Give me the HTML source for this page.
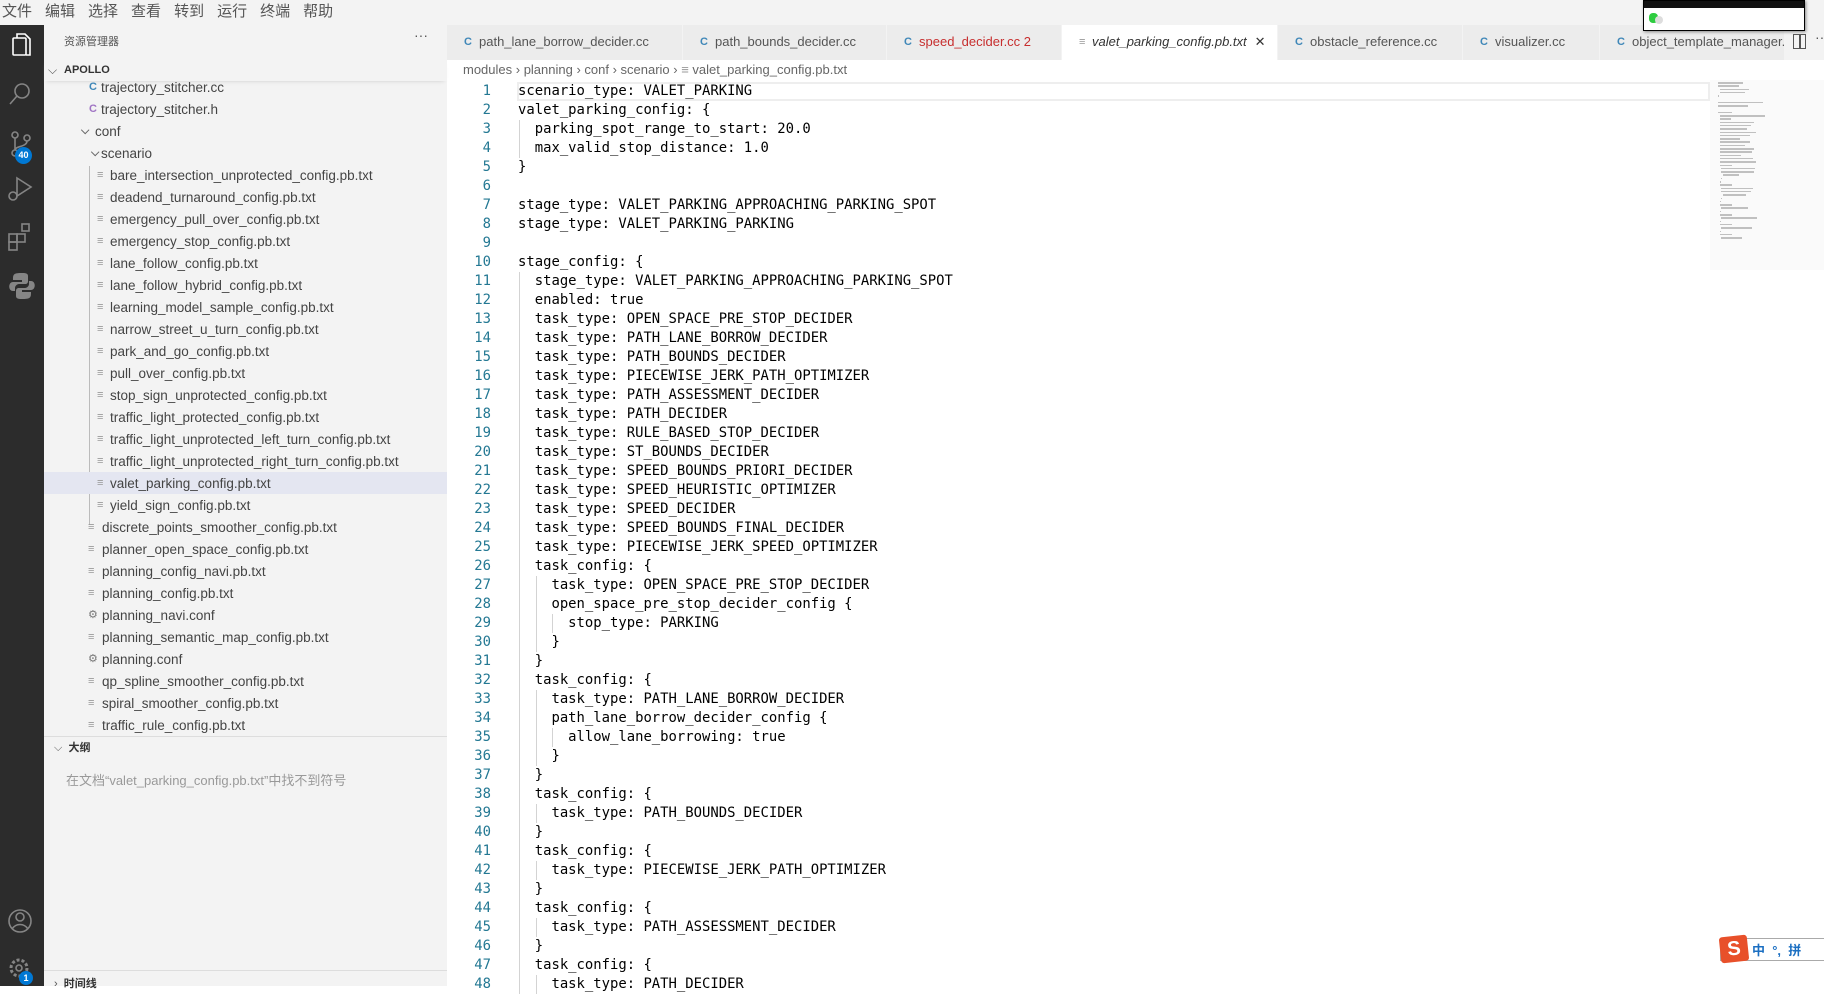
<!DOCTYPE html>
<html><head><meta charset="utf-8"><style>
*{margin:0;padding:0;box-sizing:border-box}
body{width:1824px;height:986px;overflow:hidden;background:#fff;position:relative;font-family:"Liberation Sans","Noto Sans CJK SC",sans-serif}
.abs{position:absolute}
#menu{left:0;top:0;width:1824px;height:25px;background:#f3f3f3;font-size:15px;color:#555;line-height:24px}
#menu span{margin-left:2px;margin-right:11px}
#act{left:0;top:25px;width:44px;height:961px;background:#2c2c2c}
#side{left:44px;top:25px;width:403px;height:961px;background:#f3f3f3}
.row{position:absolute;left:0;width:403px;height:22px;line-height:23px;font-size:13.5px;color:#444;white-space:nowrap}
.row.sel{background:#e4e6f1}
.ic{position:absolute;font-size:11px;color:#999}
#tabs{left:447px;top:25px;width:1377px;height:35px;background:#f3f3f3}
.tab{position:absolute;top:0;height:35px;line-height:34px;background:#ececec;border-right:1px solid #f3f3f3;font-size:13px;color:#555;white-space:nowrap;overflow:hidden;padding-left:18px}
.tab .g{position:absolute;left:17px;color:#3f87b8;font-size:11px;font-weight:bold}
#code{left:447px;top:82px;font-family:"DejaVu Sans Mono",monospace;font-size:13.9px;line-height:19px}
.ln{position:absolute;left:0;width:44px;text-align:right;color:#237893}
.cl{position:absolute;left:71px;white-space:pre;color:#000}
.guide{position:absolute;width:1px;background:#d3d3d3}
</style></head><body>
<div id="menu" class="abs"><span>文件</span><span>编辑</span><span>选择</span><span>查看</span><span>转到</span><span>运行</span><span>终端</span><span>帮助</span></div>

<div id="act" class="abs">
<svg width="44" height="961" viewBox="0 0 44 961" fill="none" stroke="#858585" stroke-width="1.6">
<g stroke="#fff"><rect x="13" y="13" width="13" height="17" rx="1"/><path d="M17 13v-4h8l5 5v16h-4"/></g>
<circle cx="22" cy="66" r="7"/><path d="M17 71l-7 8"/>
<circle cx="15" cy="110" r="3"/><circle cx="15" cy="128" r="3"/><circle cx="27" cy="113" r="3"/><path d="M15 113v12M27 116c0 6-12 5-12 9"/>
<path d="M17 153l14 9-14 9z"/><circle cx="13" cy="171" r="4"/>
<rect x="9" y="209" width="8" height="8"/><rect x="17" y="209" width="8" height="8"/><rect x="9" y="217" width="8" height="8"/><rect x="22" y="199" width="7" height="7"/>
<path d="M21 248c-8 0-8 2-8 7h9v2h-9c-5 0-5 9 0 9h2v-3c0-2 2-4 4-4h6c2 0 3-1 3-3v-5c0-3-3-3-7-3z" fill="#858585" stroke="none"/>
<path d="M23 274c8 0 8-2 8-7h-9v-2h9c5 0 5-9 0-9h-2v3c0 2-2 4-4 4h-6c-2 0-3 1-3 3v5c0 3 3 3 7 3z" fill="#858585" stroke="none"/>
<circle cx="20" cy="896" r="11"/><circle cx="20" cy="892" r="4"/><path d="M12 904c4-6 12-6 16 0"/>
<circle cx="19" cy="943" r="8" stroke-dasharray="3 2" stroke-width="3"/><circle cx="19" cy="943" r="3"/>
</svg>
<div class="abs" style="left:15px;top:122px;width:17px;height:17px;border-radius:50%;background:#0078d4;color:#fff;font-size:9px;font-weight:bold;text-align:center;line-height:17px">40</div>
<div class="abs" style="left:19px;top:946px;width:14px;height:14px;border-radius:50%;background:#0078d4;color:#fff;font-size:9px;font-weight:bold;text-align:center;line-height:14px">1</div>
</div>

<div id="side" class="abs">
<div class="abs" style="left:20px;top:8px;font-size:11px;color:#555">资源管理器</div>
<div class="abs" style="left:370px;top:2px;font-size:14px;color:#555">···</div>
<div class="abs" style="left:0;top:34px;width:403px;height:22px;line-height:22px;font-size:11px;font-weight:bold;color:#333;padding-left:20px;box-shadow:0 3px 4px -3px #ccc"><span style="position:absolute;left:4px;font-weight:normal;font-size:12px;color:#555">⌵</span>APOLLO</div>
<div class="guide" style="left:45px;top:141px;height:359px;background:#bbb"></div>
<div id="tree"></div>
<div class="abs" style="left:0;top:711px;width:403px;border-top:1px solid #ddd"></div>
<div class="abs" style="left:10px;top:714px;font-size:11px;font-weight:bold;color:#333"><span style="font-weight:normal;color:#555">⌵</span>&nbsp;&nbsp;大纲</div>
<div class="abs" style="left:22px;top:745px;font-size:13px;color:#999">在文档“valet_parking_config.pb.txt”中找不到符号</div>
<div class="abs" style="left:0;top:945px;width:403px;border-top:1px solid #ddd"></div>
<div class="abs" style="left:10px;top:950px;font-size:11px;font-weight:bold;color:#333"><span style="font-weight:normal;color:#555">›</span>&nbsp;&nbsp;时间线</div>
</div>

<div id="tabs" class="abs">
<div class="tab" style="left:0;width:236px"><span class="g">C</span><span style="padding-left:14px">path_lane_borrow_decider.cc</span></div>
<div class="tab" style="left:236px;width:204px"><span class="g">C</span><span style="padding-left:14px">path_bounds_decider.cc</span></div>
<div class="tab" style="left:440px;width:175px;color:#c72e2e"><span class="g">C</span><span style="padding-left:14px">speed_decider.cc 2</span></div>
<div class="tab" style="left:615px;width:216px;background:#fff;color:#333;font-style:italic"><span class="g" style="color:#999;font-style:normal">≡</span><span style="padding-left:12px">valet_parking_config.pb.txt</span><span style="font-style:normal;margin-left:8px">✕</span></div>
<div class="tab" style="left:831px;width:185px"><span class="g">C</span><span style="padding-left:14px">obstacle_reference.cc</span></div>
<div class="tab" style="left:1016px;width:137px"><span class="g">C</span><span style="padding-left:14px">visualizer.cc</span></div>
<div class="tab" style="left:1153px;width:185px"><span class="g">C</span><span style="padding-left:14px">object_template_manager.cc</span></div>
<div class="abs" style="left:1346px;top:9px;width:13px;height:15px;border:1.5px solid #555"></div>
<div class="abs" style="left:1352px;top:9px;width:1.5px;height:15px;background:#555"></div>
<div class="abs" style="left:1368px;top:4px;font-size:14px;color:#555">··</div>
</div>

<div class="abs" style="left:463px;top:62px;font-size:13px;color:#666;white-space:nowrap">modules › planning › conf › scenario › <span style="color:#999">≡</span> valet_parking_config.pb.txt</div>

<div class="abs" style="left:517px;top:82px;width:1193px;height:19px;border:2px solid #eee"></div>
<div id="code" class="abs"></div>
<div id="mini" class="abs" style="left:1718px;top:82px"></div>
<div class="abs" style="left:1710px;top:80px;width:114px;height:190px;background:rgba(0,0,0,0.02)"></div>

<div class="abs" style="left:1643px;top:0;width:162px;height:31px;background:#fff;border:1px solid #000;box-shadow:1px 1px 3px #888">
<div style="height:7px;background:#111"></div>
<div class="abs" style="left:5px;top:12px;width:9px;height:10px;background:#2ecc40;border-radius:4px"></div>
<div class="abs" style="left:11px;top:15px;width:8px;height:8px;background:#ddd;border-radius:4px"></div>
</div>

<div class="abs" style="left:1720px;top:938px;width:104px;height:23px;border:1px solid #aaa;border-right:none;background:#fff"></div>
<div class="abs" style="left:1720px;top:936px;width:28px;height:26px;background:#e8502a;border-radius:3px;transform:rotate(-6deg);color:#fff;font-weight:bold;font-size:20px;text-align:center;line-height:26px">S</div>
<div class="abs" style="left:1752px;top:940px;font-size:13px;color:#1b6fc2;font-weight:bold;white-space:nowrap">中&nbsp; °,&nbsp; 拼</div>

<script>
var tree=[
[1,'c','trajectory_stitcher.cc',101,89],[1,'h','trajectory_stitcher.h',101,89],[1,'d','conf',95,81],[1,'d','scenario',101,91],
['f','bare_intersection_unprotected_config.pb.txt'],['f','deadend_turnaround_config.pb.txt'],['f','emergency_pull_over_config.pb.txt'],['f','emergency_stop_config.pb.txt'],['f','lane_follow_config.pb.txt'],['f','lane_follow_hybrid_config.pb.txt'],['f','learning_model_sample_config.pb.txt'],['f','narrow_street_u_turn_config.pb.txt'],['f','park_and_go_config.pb.txt'],['f','pull_over_config.pb.txt'],['f','stop_sign_unprotected_config.pb.txt'],['f','traffic_light_protected_config.pb.txt'],['f','traffic_light_unprotected_left_turn_config.pb.txt'],['f','traffic_light_unprotected_right_turn_config.pb.txt'],['s','valet_parking_config.pb.txt'],['f','yield_sign_config.pb.txt'],
['t','discrete_points_smoother_config.pb.txt'],['t','planner_open_space_config.pb.txt'],['t','planning_config_navi.pb.txt'],['t','planning_config.pb.txt'],['g','planning_navi.conf'],['t','planning_semantic_map_config.pb.txt'],['g','planning.conf'],['t','qp_spline_smoother_config.pb.txt'],['t','spiral_smoother_config.pb.txt'],['t','traffic_rule_config.pb.txt']];
var h='';
tree.forEach(function(r,i){var y=76+i*22-25;var tx,ix,ic='≡',col='#999';
if(r[0]===1){tx=r[3]-44;ix=r[4]-44;if(r[1]=='c'){ic='C';col='#3f87b8'}else if(r[1]=='h'){ic='C';col='#a074c4'}else{ic='⌵';col='#666'}h+='<div class="row" style="top:'+y+'px"><span class="ic" style="left:'+ix+'px;color:'+col+';font-weight:bold">'+ic+'</span><span style="position:absolute;left:'+tx+'px">'+r[2]+'</span></div>';return}
var k=r[0];if(k=='f'||k=='s'){tx=110-44;ix=97-44}else{tx=102-44;ix=88-44}
if(k=='g'){ic='⚙';col='#777'}
h+='<div class="row'+(k=='s'?' sel':'')+'" style="top:'+y+'px"><span class="ic" style="left:'+ix+'px;color:'+col+'">'+ic+'</span><span style="position:absolute;left:'+tx+'px">'+r[1]+'</span></div>';});
document.getElementById('tree').innerHTML=h;
var L=["scenario_type: VALET_PARKING","valet_parking_config: {","  parking_spot_range_to_start: 20.0","  max_valid_stop_distance: 1.0","}","","stage_type: VALET_PARKING_APPROACHING_PARKING_SPOT","stage_type: VALET_PARKING_PARKING","","stage_config: {","  stage_type: VALET_PARKING_APPROACHING_PARKING_SPOT","  enabled: true"];
["OPEN_SPACE_PRE_STOP_DECIDER","PATH_LANE_BORROW_DECIDER","PATH_BOUNDS_DECIDER","PIECEWISE_JERK_PATH_OPTIMIZER","PATH_ASSESSMENT_DECIDER","PATH_DECIDER","RULE_BASED_STOP_DECIDER","ST_BOUNDS_DECIDER","SPEED_BOUNDS_PRIORI_DECIDER","SPEED_HEURISTIC_OPTIMIZER","SPEED_DECIDER","SPEED_BOUNDS_FINAL_DECIDER","PIECEWISE_JERK_SPEED_OPTIMIZER"].forEach(function(t){L.push("  task_type: "+t)});
L=L.concat(["  task_config: {","    task_type: OPEN_SPACE_PRE_STOP_DECIDER","    open_space_pre_stop_decider_config {","      stop_type: PARKING","    }","  }","  task_config: {","    task_type: PATH_LANE_BORROW_DECIDER","    path_lane_borrow_decider_config {","      allow_lane_borrowing: true","    }","  }","  task_config: {","    task_type: PATH_BOUNDS_DECIDER","  }","  task_config: {","    task_type: PIECEWISE_JERK_PATH_OPTIMIZER","  }","  task_config: {","    task_type: PATH_ASSESSMENT_DECIDER","  }","  task_config: {","    task_type: PATH_DECIDER"]);
var c='',m='',cw=8.37;
L.forEach(function(s,i){var y=i*19;c+='<div class="ln" style="top:'+y+'px">'+(i+1)+'</div><div class="cl" style="top:'+y+'px">'+s+'</div>';
var ind=s.match(/^ */)[0].length;for(var g=0;g<ind;g+=2){c+='<div class="guide" style="left:'+(72+g*cw)+'px;top:'+y+'px;height:19px"></div>'}
if(s.trim())m+='<div class="abs" style="left:'+(ind*0.8)+'px;top:'+(i*3.3)+'px;width:'+(s.trim().length*0.9)+'px;height:1.5px;background:#c4c4c4"></div>';});
document.getElementById('code').innerHTML=c;document.getElementById('mini').innerHTML=m;
</script>
</body></html>
